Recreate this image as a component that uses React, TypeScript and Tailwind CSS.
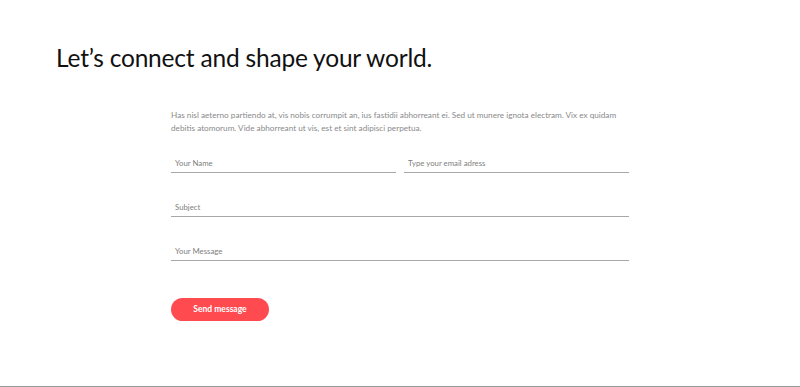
export default function App() {
  return (
    <div className="flex h-[387px] w-full flex-col bg-white font-['Lato',sans-serif]">
      <div className="flex flex-1 flex-col">
        <h1 className="pl-[56px] pt-[43px] font-['Lato',sans-serif] text-[24.5px] leading-[30px] tracking-[-0.2px] text-[#111]">
          Let’s connect and shape your world.
        </h1>
        <div className="ml-[171px] mt-[36px] flex w-[458px] flex-col">
          <p className="text-[8.2px] leading-[13px] text-[#8a8a8a]">
            Has nisl aeterno partiendo at, vis nobis corrumpit an, ius fastidii abhorreant ei. Sed ut munere ignota electram. Vix ex quidam debitis atomorum. Vide abhorreant ut vis, est et sint adipisci perpetua.
          </p>
          <div className="mt-[23px] grid grid-cols-2 gap-[8px]">
            <Field label="Your Name" />
            <Field label="Type your email adress" />
          </div>
          <div className="mt-[29px]">
            <Field label="Subject" />
          </div>
          <div className="mt-[29px]">
            <Field label="Your Message" />
          </div>
          <button className="mt-[37px] h-[23px] w-[98px] rounded-full bg-[#ff4a50] text-[8.5px] font-bold text-white">
            Send message
          </button>
        </div>
      </div>
      <div className="h-px w-full bg-[#9a9a9a]" />
    </div>
  )
}

function Field({ label }: { label: string }) {
  return (
    <div className="flex h-[15px] items-start border-b border-[#a8a8a8] pl-[4px] text-[7.8px] leading-[10px] text-[#808080]">
      {label}
    </div>
  )
}
